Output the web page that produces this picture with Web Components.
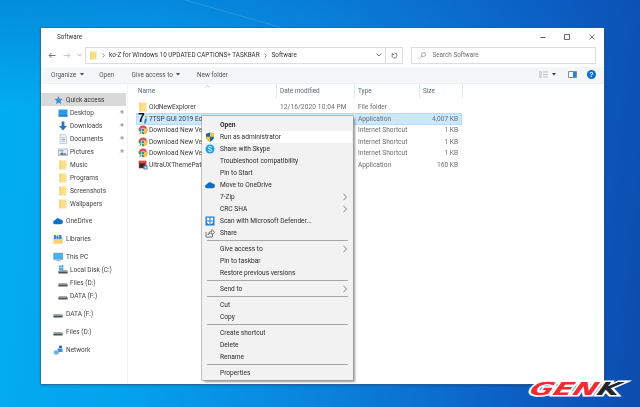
<!DOCTYPE html>
<html>
<head>
<meta charset="utf-8">
<title>Software</title>
<style>
  html, body { margin: 0; height: 100%; overflow: hidden; background: #0b6fd0; }
</style>
</head>
<body>

<win-desktop>
  <explorer-window>
    <title-bar>Software</title-bar>
    <addr-bar></addr-bar>
    <cmd-bar></cmd-bar>
    <nav-pane slot="nav">
      <nav-row icon="star" active>Quick access</nav-row>
      <nav-row icon="desktop" sub pin>Desktop</nav-row>
      <nav-row icon="down" sub pin>Downloads</nav-row>
      <nav-row icon="doc" sub pin>Documents</nav-row>
      <nav-row icon="pics" sub pin>Pictures</nav-row>
      <nav-row icon="folder" sub>Music</nav-row>
      <nav-row icon="folder" sub>Programs</nav-row>
      <nav-row icon="folder" sub>Screenshots</nav-row>
      <nav-row icon="folder" sub>Wallpapers</nav-row>
      <nav-row icon="cloud" gap>OneDrive</nav-row>
      <nav-row icon="lib" gap>Libraries</nav-row>
      <nav-row icon="pc" gap>This PC</nav-row>
      <nav-row icon="sysdisk" sub>Local Disk (C:)</nav-row>
      <nav-row icon="disk" sub>Files (D:)</nav-row>
      <nav-row icon="disk" sub>DATA (F:)</nav-row>
      <nav-row icon="disk" gap>DATA (F:)</nav-row>
      <nav-row icon="disk" gap>Files (D:)</nav-row>
      <nav-row icon="net" gap>Network</nav-row>
    </nav-pane>
    <file-pane slot="files">
      <file-row icon="folder" name="OldNewExplorer" date="12/16/2020 10:04 PM" type="File folder"></file-row>
      <file-row icon="seven" name="7TSP GUI 2019 Edition" date="8/24/2019 4:18 AM" type="Application" size="4,007 KB" selected></file-row>
      <file-row icon="link" name="Download New Ve" type="Internet Shortcut" size="1 KB"></file-row>
      <file-row icon="link" name="Download New Ve" type="Internet Shortcut" size="1 KB"></file-row>
      <file-row icon="link" name="Download New Ve" type="Internet Shortcut" size="1 KB"></file-row>
      <file-row icon="ultra" name="UltraUXThemePatc" type="Application" size="160 KB"></file-row>
    </file-pane>
  </explorer-window>

  <ctx-menu>
    <ctx-item bold>Open</ctx-item>
    <ctx-item icon="shield" hot>Run as administrator</ctx-item>
    <ctx-item icon="skype">Share with Skype</ctx-item>
    <ctx-item>Troubleshoot compatibility</ctx-item>
    <ctx-item>Pin to Start</ctx-item>
    <ctx-item icon="cloud">Move to OneDrive</ctx-item>
    <ctx-item more>7-Zip</ctx-item>
    <ctx-item more>CRC SHA</ctx-item>
    <ctx-item icon="defender">Scan with Microsoft Defender...</ctx-item>
    <ctx-item icon="share">Share</ctx-item>
    <ctx-sep></ctx-sep>
    <ctx-item more>Give access to</ctx-item>
    <ctx-item>Pin to taskbar</ctx-item>
    <ctx-item>Restore previous versions</ctx-item>
    <ctx-sep></ctx-sep>
    <ctx-item more>Send to</ctx-item>
    <ctx-sep></ctx-sep>
    <ctx-item>Cut</ctx-item>
    <ctx-item>Copy</ctx-item>
    <ctx-sep></ctx-sep>
    <ctx-item>Create shortcut</ctx-item>
    <ctx-item>Delete</ctx-item>
    <ctx-item>Rename</ctx-item>
    <ctx-sep></ctx-sep>
    <ctx-item>Properties</ctx-item>
  </ctx-menu>

  <genk-logo></genk-logo>
</win-desktop>

<script>
const UI_FONT = `Roboto, "Open Sans", sans-serif`;

const ICONS = {
  folder: `<path d="M1.500.500h7v9h-7z" fill="#fbdf8d"/><path d="M1.500.500h1v9h-1z" fill="#f3c95f"/>`,
  star: `<path d="M5.500 1l1.200 2.800 3 .3-2.300 2 .7 3-2.600-1.600L3 9.100l.7-3-2.300-2 3-.3z" fill="#3f8fd8"/>`,
  desktop: `<path d="M.5 1.500h9v7h-9z" fill="#2b9be8"/><path d="M.5 7.500h9v1h-9z" fill="#0d6db8"/>`,
  down: `<path d="M3.600.5h2.800v4.400h2.600L5 9.500 1 4.900h2.600z" fill="#2a74c8"/>`,
  doc: `<path d="M2 .5h4.500L8.500 2.500v7H2z" fill="#eef1f5" stroke="#a9b4c0" stroke-width=".6"/><path d="M3.500 4h3.500M3.500 5.500h3.500M3.500 7h3.500" stroke="#7f9dbd" stroke-width=".7"/>`,
  pics: `<path d="M.5 2h9v6.500h-9z" fill="#e9eef3" stroke="#8b97a4" stroke-width=".6"/><path d="M1.200 7.800l2.800-2.600 2 1.500 1-.8 2 1.900z" fill="#4a6f93"/><path d="M1.500 3h4v1.500h-4z" fill="#7eb2dd"/>`,
  cloud: `<path d="M2.300 8.300a2 2 0 0 1-.3-4A3 3 0 0 1 7.300 3.500a2.400 2.400 0 0 1 .5 4.800z" fill="#0f6fc6"/>`,
  lib: `<path d="M.5 3h9v6.500h-9z" fill="#f8c84f"/><path d="M1 1h2v5H1zM3.500 1.500h2V6h-2zM6 1h2.500v5H6z" fill="#3b89d4"/><path d="M.5 5h9v4.500h-9z" fill="#fad271"/>`,
  pc: `<path d="M.5 1h9.500v6.500H.5z" fill="#49b0ee" stroke="#8fa3b4" stroke-width=".5"/><path d="M4 7.500h2.500v1H4zM2.500 8.500h5.500v.8H2.500z" fill="#a9b6c2"/>`,
  disk: `<path d="M1 5.500h8l.6 1.300v1.700H.4V6.800z" fill="#4e5357"/><path d="M1 5.500h8l.6 1.300H.4z" fill="#a6abaf"/>`,
  sysdisk: `<path d="M1 5.500h8l.6 1.300v1.700H.4V6.800z" fill="#4e5357"/><path d="M1 5.500h8l.6 1.300H.4z" fill="#a6abaf"/><path d="M1 .8l1.900-.3v2.100H1zM3.200.4l2.100-.3v2.500H3.200zM1 2.900h1.900V5L1 4.700zM3.200 2.900h2.100v2.500l-2.100-.3z" fill="#32a3e6"/>`,
  net: `<path d="M4.500 3.500h5v3.500h-5z" fill="#3f8fd8"/><path d="M.8 5.500h5v3.500h-5z" fill="#6fb3e8"/><path d="M6 .6h3v2.500H6z" fill="#2a74c8"/><path d="M2 9.300h2.500v.5H2z" fill="#7d8892"/>`,
  seven: `<path d="M7 4.500l2 .3-1.200 4.700H6z" fill="#3a7fc4"/><path d="M7.500 1.500l1.800 1-1 1.500-1.300-.8z" fill="#d2a03a"/>`,
  link: `<circle cx="5" cy="4.800" r="4.400" fill="#e8483b"/><path d="M5 4.800L9 3a4.400 4.400 0 0 1-3 6z" fill="#f6c332"/><path d="M5 4.800L6 9a4.400 4.400 0 0 1-5-5.500z" fill="#38a453"/><circle cx="5" cy="4.800" r="2" fill="#fff"/><circle cx="5" cy="4.800" r="1.500" fill="#3a7fdc"/><path d="M.8 6.500h3.200v3.200H.8z" fill="#fff"/><path d="M1.400 9.200c0-1.200.5-1.700 1.300-1.700v-.7l1 1-1 1v-.6c-.5 0-.9.300-1.300 1z" fill="#2e62b8"/>`,
  ultra: `<path d="M.8.800h7.500v7.500H.8z" fill="#b22a24"/><path d="M.8.800h7.500v2.400H.8z" fill="#d94e3d"/><path d="M1.600 3.600h4.800v4H1.600z" fill="#2b2b33"/><path d="M5.500 5.500h4v4h-4z" fill="#3c81c9"/><path d="M6.500 6.500h2v2h-2z" fill="#d9e6f2"/>`,
  shield: `<path d="M5 .4l4 1.300v3.100C9 7.200 7.300 8.800 5 9.700 2.700 8.800 1 7.200 1 4.800V1.700z" fill="#1f5fae"/><path d="M5 .4l4 1.300v3.100H5zM5 4.800v4.900C2.700 8.800 1 7.200 1 4.800z" fill="#f7c933"/>`,
  skype: `<circle cx="5" cy="5" r="4.500" fill="#1d9fe3"/><path d="M6.800 3.500C6.300 2.800 5.500 2.600 4.700 2.700 3.700 2.800 3.200 3.400 3.300 4c.2 1.400 3.500.8 3.600 2.200.1.800-.8 1.300-1.800 1.200-.8 0-1.500-.4-1.900-1" fill="none" stroke="#fff" stroke-width=".9"/>`,
  defender: `<path d="M.5.500h9v9h-9z" fill="#1c7fd6"/><path d="M1.800 1.800h2.700v2.700H1.800zM5.500 1.800h2.700v2.700H5.500zM1.800 5.500h2.700c0 1.200 0 2-.3 2.700-1.400-.5-2.400-1.400-2.400-2.700zM5.500 5.500h2.700c0 1.300-1 2.200-2.700 2.800z" fill="#fff"/>`,
  share: `<path d="M1 4v5h6.500V6.500M3 6.800C3.300 4.500 5 3.300 7 3.300V1.500l2.500 2.800L7 7V5C5.300 5 4 5.600 3 6.800z" fill="none" stroke="#5a5a5a" stroke-width=".8"/>`
};

function svgIcon(name, size) {
  return `<svg width="${size}" height="${size}" viewBox="0 0 10 10" style="display:block;flex:none">${ICONS[name] || ''}</svg>`;
}

class WinDesktop extends HTMLElement {
  constructor() {
    super();
    this.attachShadow({ mode: 'open' }).innerHTML = `
      <style>
        :host {
          display: block; position: relative; width: 640px; height: 407px; overflow: hidden;
          font-family: ${UI_FONT};
          background:
            linear-gradient(172deg, rgba(7, 60, 170, .3) 0, rgba(7, 60, 170, 0) 22%),
            linear-gradient(96deg, #02aef2 0, #04a2ec 24%, #0a84dc 52%, #0c5cc0 84%, #0c4cae 100%);
        }
        .beam { position: absolute; left: 180px; top: -2px; width: 106px; height: 1px; background: rgba(255,255,255,.14);
                transform-origin: 0 0; transform: rotate(16deg); }
      </style>
      <div class="beam"></div>
      <slot></slot>`;
  }
}

class ExplorerWindow extends HTMLElement {
  constructor() {
    super();
    this.attachShadow({ mode: 'open' }).innerHTML = `
      <style>
        :host {
          display: flex; flex-direction: column; position: absolute; left: 41px; top: 28px; width: 563px; height: 356px;
          background: #fff; color: #444; box-shadow: 0 0 0 .5px #3e5f86, 0 1px 3px rgba(0,0,0,.3);
          filter: blur(.3px);
        }
        .body { flex: 1; display: flex; min-height: 0; }
      </style>
      <slot></slot>
      <div class="body"><slot name="nav"></slot><slot name="files"></slot></div>`;
  }
}

class TitleBar extends HTMLElement {
  constructor() {
    super();
    this.attachShadow({ mode: 'open' }).innerHTML = `
      <style>
        :host { display: flex; align-items: center; height: 17px; margin-bottom: 2px; padding-left: 16px; font-size: 6.300px; color: #333; }
        .t { flex: 1; }
        .b { width: 24.5px; display: flex; justify-content: center; }
        svg { display: block; }
      </style>
      <div class="t"><slot></slot></div>
      <div class="b"><svg width="6" height="6"><path d="M.5 3.500h5" stroke="#555"/></svg></div>
      <div class="b"><svg width="6" height="6"><path d="M.5.500h5v5h-5z" fill="none" stroke="#444" stroke-width=".8"/></svg></div>
      <div class="b"><svg width="6" height="6"><path d="M.5.500l5 5M5.500.500l-5 5" stroke="#444" stroke-width=".7"/></svg></div>`;
  }
}

class AddrBar extends HTMLElement {
  constructor() {
    super();
    this.attachShadow({ mode: 'open' }).innerHTML = `
      <style>
        :host { display: flex; align-items: center; height: 16.5px; margin-bottom: 3.500px; padding-left: 7px; font-size: 6.300px; color: #333; }
        svg { display: block; flex: none; }
        .box { display: flex; align-items: center; height: 100%; box-sizing: border-box; border: 1px solid #dcdcdc; }
        .path { width: 318px; margin-left: 3px; padding-left: 3px; gap: 3.500px; }
        .path .fill { flex: 1; }
        .refresh { width: 16px; height: 100%; border-left: 1px solid #dcdcdc; display: flex; align-items: center; justify-content: center; }
        .search { width: 185px; margin-left: 8px; padding-left: 6.500px; gap: 7px; color: #6d6d6d; }
      </style>
      <svg width="8" height="7" style="margin-right:7px"><path d="M7.500 3.500H1M3.500 1L1 3.500 3.500 6" fill="none" stroke="#777"/></svg>
      <svg width="8" height="7" style="margin-right:6px"><path d="M.5 3.500H7M4.500 1L7 3.500 4.500 6" fill="none" stroke="#c9c9c9"/></svg>
      <svg width="5" height="4"><path d="M.5 1l2 2 2-2" fill="none" stroke="#999" stroke-width=".8"/></svg>
      <div class="box path">
        ${svgIcon('folder', 9)}
        <svg width="3" height="5"><path d="M.5.500l2 2-2 2" fill="none" stroke="#666" stroke-width=".7"/></svg>
        <span style="margin-left:1px">ko-Z for Windows 10 UPDATED CAPTIONS+ TASKBAR</span>
        <svg width="3" height="5" style="margin-left:1px"><path d="M.5.500l2 2-2 2" fill="none" stroke="#666" stroke-width=".7"/></svg>
        <span style="margin-left:1px">Software</span>
        <span class="fill"></span>
        <svg width="6" height="4"><path d="M.5.500l2.500 2.500L5.500.500" fill="none" stroke="#555" stroke-width=".8"/></svg>
        <div class="refresh"><svg width="7" height="7"><path d="M3.500 1a2.500 2.500 0 1 1-2.200 1.300M1.300.800v1.700H3" fill="none" stroke="#666" stroke-width=".8"/></svg></div>
      </div>
      <div class="box search">
        <svg width="7" height="7"><circle cx="4.500" cy="2.500" r="2" fill="none" stroke="#888" stroke-width=".7"/><path d="M3 4L.5 6.500" stroke="#888" stroke-width=".7"/></svg>
        <span>Search Software</span>
      </div>`;
  }
}

class CmdBar extends HTMLElement {
  constructor() {
    super();
    const caret = `<svg width="4" height="3" style="margin-left:3.500px"><path d="M0 0h4L2 2.500z" fill="#444"/></svg>`;
    this.attachShadow({ mode: 'open' }).innerHTML = `
      <style>
        :host { display: flex; align-items: center; height: 16.5px; box-sizing: border-box; padding-left: 10px; background: #f5f6f7;
                border-bottom: 1px solid #eeeff0; font-size: 6.400px; color: #555; }
        span { display: flex; align-items: center; }
        svg { display: block; flex: none; }
        .r { margin-left: auto; display: flex; align-items: center; }
      </style>
      <span style="margin-right:15.500px">Organize ${caret}</span>
      <span style="margin-right:17.500px">Open</span>
      <span style="margin-right:16.500px">Give access to ${caret}</span>
      <span>New folder</span>
      <div class="r">
        <svg width="9" height="7"><path d="M0 0h3v7H0z" fill="#d4d4d4"/><path d="M4 1h5M4 3.500h5M4 6h5" stroke="#bdbdbd"/></svg>
        <svg width="4" height="3" style="margin-left:4px"><path d="M0 0h4L2 2.500z" fill="#333"/></svg>
        <svg width="9" height="7" style="margin-left:12px"><path d="M.5.500h8v6h-8z" fill="#fff" stroke="#7b8c9c"/><path d="M5 1h3v5H5z" fill="#1f88d8"/></svg>
        <svg width="9" height="9" style="margin-left:10px;margin-right:8px"><circle cx="4.500" cy="4.500" r="4.500" fill="#0a6fd0"/><text x="4.500" y="7" font-size="7" font-weight="700" fill="#fff" text-anchor="middle" font-family="Liberation Sans, sans-serif">?</text></svg>
      </div>`;
  }
}

class NavPane extends HTMLElement {
  constructor() {
    super();
    this.attachShadow({ mode: 'open' }).innerHTML = `
      <style>
        :host { display: block; width: 87px; flex: none; box-sizing: border-box; padding: 9.500px 1px 0 0; border-right: 1px solid #f3f3f3; }
      </style>
      <slot></slot>`;
  }
}

class NavRow extends HTMLElement {
  constructor() {
    super();
    const icon = this.getAttribute('icon');
    const pin = this.hasAttribute('pin')
      ? `<svg class="pin" width="5" height="5"><path d="M3 0l2 2-1 .5-.5 1.500L1 1.500 2.500 1zM1.800 3L.2 4.800" fill="#aaa" stroke="#aaa" stroke-width=".3"/></svg>` : '';
    this.attachShadow({ mode: 'open' }).innerHTML = `
      <style>
        :host { display: flex; align-items: center; height: 13px; padding-left: 12px; gap: 3px; font-size: 6.500px; color: #444; white-space: nowrap; }
        :host([sub]) { padding-left: 17px; gap: 2px; }
        :host([gap]) { margin-top: 4.900px; }
        :host([active]) { background: #d9d9d9; color: #333; }
        .pin { margin-left: auto; margin-right: 2px; display: block; }
      </style>
      ${svgIcon(icon, 10)}
      <span><slot></slot></span>
      ${pin}`;
  }
}

class FilePane extends HTMLElement {
  constructor() {
    super();
    this.attachShadow({ mode: 'open' }).innerHTML = `
      <style>
        :host { display: block; flex: 1; padding-left: 8px; position: relative; }
        .head { display: grid; grid-template-columns: 141px 78px 65px 43px; height: 14px; align-items: center; font-size: 6.400px; color: #5a6b7c; }
        .head div { height: 100%; display: flex; align-items: center; box-sizing: border-box; padding-left: 3px; border-right: 1px solid #e6e6e6; }
        .head div:first-child { padding-left: 2px; }
        .sort { position: absolute; left: 77px; top: 1px; }
        .rows { padding-top: 4px; }
      </style>
      <div class="head"><div>Name</div><div>Date modified</div><div>Type</div><div>Size</div></div>
      <svg class="sort" width="5" height="3"><path d="M.5 2.500l2-2 2 2" fill="none" stroke="#aaa" stroke-width=".7"/></svg>
      <div class="rows"><slot></slot></div>`;
  }
}

class FileRow extends HTMLElement {
  constructor() {
    super();
    const get = n => this.getAttribute(n) || '';
    const icon = get('icon');
    // the 7TSP icon is a big black seven with two small marks drawn beside it
    const glyph = icon === 'seven'
      ? `<span class="seven">7${svgIcon('seven', 10)}</span>`
      : svgIcon(icon, 10);
    this.attachShadow({ mode: 'open' }).innerHTML = `
      <style>
        :host { display: grid; grid-template-columns: 144px 78px 100px; height: 11.500px; align-items: center; box-sizing: border-box;
                width: 326px; font-size: 6.600px; color: #6d6d6d; white-space: nowrap; }
        :host([selected]) { background: #cce8ff; box-shadow: inset 0 0 0 .5px #99d1ff; }
        .name { display: flex; align-items: center; gap: 1px; padding-left: 2px; color: #3c3c3c; }
        .date { letter-spacing: .1px; }
        .seven { position: relative; display: block; width: 10px; height: 11px; font: 700 12px/11px "Liberation Sans", sans-serif; color: #111; }
        .seven svg { position: absolute; left: 0; top: .5px; }
        .rest { display: flex; justify-content: space-between; }
      </style>
      <div class="name">${glyph}<span>${get('name')}</span></div>
      <div class="date">${get('date')}</div>
      <div class="rest"><span>${get('type')}</span><span>${get('size')}</span></div>`;
  }
}

class CtxMenu extends HTMLElement {
  constructor() {
    super();
    this.attachShadow({ mode: 'open' }).innerHTML = `
      <style>
        :host { display: block; position: absolute; left: 202px; top: 116px; width: 150.500px; height: 264px; box-sizing: border-box;
                padding: 2.700px 1px 0; background: #f2f2f2; box-shadow: 0 0 0 .6px #9a9a9a, 1.500px 1.500px 2px rgba(0,0,0,.4);
                font-size: 6.600px; color: #2b2b2b; filter: blur(.3px); }
      </style>
      <slot></slot>`;
  }
}

class CtxItem extends HTMLElement {
  constructor() {
    super();
    const icon = this.getAttribute('icon');
    const more = this.hasAttribute('more')
      ? `<svg class="more" width="4" height="8"><path d="M.5.800L3.500 4 .5 7.200" fill="none" stroke="#666" stroke-width=".8"/></svg>` : '';
    this.attachShadow({ mode: 'open' }).innerHTML = `
      <style>
        :host { display: flex; align-items: center; height: 12px; padding-left: 2px; gap: 5px; white-space: nowrap; }
        :host([hot]) { background: #fff; }
        :host([bold]) { font-weight: 700; }
        .ic { width: 10px; flex: none; }
        .more { margin-left: auto; margin-right: 5px; display: block; }
      </style>
      <div class="ic">${icon ? svgIcon(icon, 10) : ''}</div>
      <span><slot></slot></span>
      ${more}`;
  }
}

class CtxSep extends HTMLElement {
  constructor() {
    super();
    this.attachShadow({ mode: 'open' }).innerHTML = `
      <style>
        :host { display: flex; align-items: center; height: 4px; padding: 0 4px; }
        div { flex: 1; height: 1px; background: #a6a6a6; }
      </style>
      <div></div>`;
  }
}

class GenkLogo extends HTMLElement {
  constructor() {
    super();
    this.attachShadow({ mode: 'open' }).innerHTML = `
      <style>
        :host { display: block; position: absolute; left: 535px; top: 378px; width: 98px; height: 21px; }
        .w { display: block; transform-origin: 0 0; transform: scaleX(1.6) skewX(-14deg); white-space: nowrap;
             font: italic 700 18px/21px "DejaVu Sans", sans-serif; paint-order: stroke fill; -webkit-text-stroke: 3px #fff; }
        .r { color: #ef2b34; }
        .k { color: #23252a; }
      </style>
      <span class="w"><span class="r">GEN</span><span class="k">K</span></span>`;
  }
}

const defs = {
  'win-desktop': WinDesktop, 'explorer-window': ExplorerWindow, 'title-bar': TitleBar, 'addr-bar': AddrBar,
  'cmd-bar': CmdBar, 'nav-pane': NavPane, 'nav-row': NavRow, 'file-pane': FilePane, 'file-row': FileRow,
  'ctx-menu': CtxMenu, 'ctx-item': CtxItem, 'ctx-sep': CtxSep, 'genk-logo': GenkLogo
};
Object.keys(defs).forEach(k => customElements.define(k, defs[k]));
</script>
</body>
</html>
